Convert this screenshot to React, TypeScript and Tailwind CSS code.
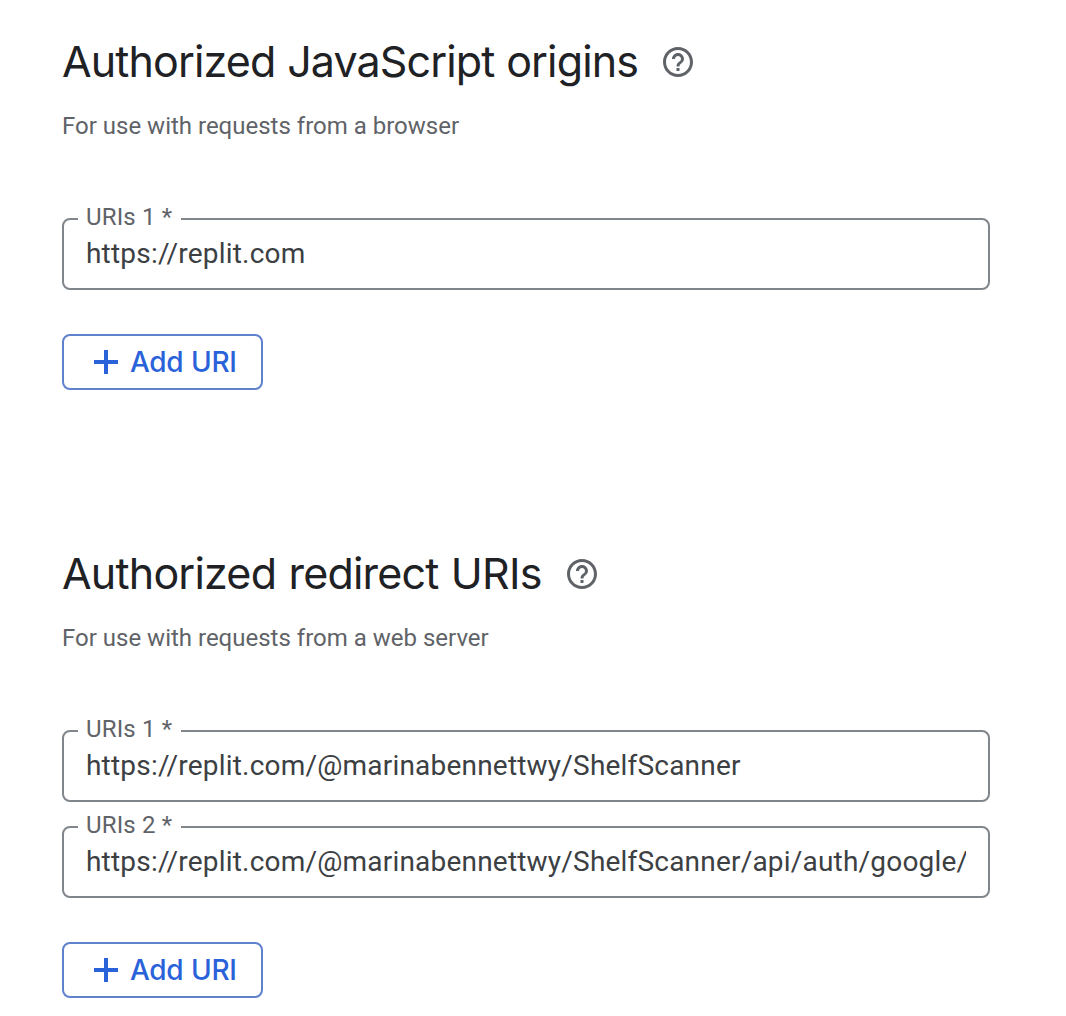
import { MdHelpOutline } from "react-icons/md";

function Field({ label, value }: { label: string; value: string }) {
  return (
    <div className="relative h-[72px] w-full rounded-lg border-2 border-[#80868b] px-[22px]">
      <label className="absolute -top-[19px] left-[14px] w-[103px] bg-white pl-2 text-[24px] leading-8 tracking-[0.15px] whitespace-nowrap text-[#5f6368]">
        {label}
      </label>
      <div className="overflow-hidden text-[28px] leading-[68px] tracking-[0.2px] whitespace-nowrap text-[#3c4043]">
        {value}
      </div>
    </div>
  );
}

function AddButton() {
  return (
    <button className="mt-11 flex h-14 w-[201px] items-center rounded-lg border-2 border-[#5f82cc] pl-[30px] text-[#2962d9]">
      <svg className="size-6 shrink-0" viewBox="0 0 24 24" fill="currentColor">
        <path d="M10 0h4v10h10v4H14v10h-4V14H0v-4h10z" />
      </svg>
      <span className="ml-3 font-['Inter',sans-serif] text-[28px] leading-9 font-medium tracking-[-0.4px] [word-spacing:1px] whitespace-nowrap">
        Add URI
      </span>
    </button>
  );
}

type SectionProps = { title: string; hint: string; values: string[]; titleClass: string };

function Section({ title, hint, values, titleClass }: SectionProps) {
  return (
    <section className="h-[512px] pt-8">
      <div className="flex h-[60px] items-center">
        <h2 className={titleClass}>{title}</h2>
        <MdHelpOutline className="size-9 shrink-0 text-[#5f6368]" />
      </div>
      <p className="mt-[18px] text-[24px] leading-8 text-[#5f6368]">{hint}</p>
      <div className="mt-[76px] flex flex-col gap-6">
        {values.map((value, i) => (
          <Field key={value} label={`URIs ${i + 1} *`} value={value} />
        ))}
      </div>
      <AddButton />
    </section>
  );
}

export default function App() {
  return (
    <main className="h-[1016px] w-[1066px] overflow-hidden bg-white pr-[76px] pl-[62px] font-['Roboto',sans-serif]">
      <Section
        title="Authorized JavaScript origins"
        hint="For use with requests from a browser"
        values={["https://replit.com"]}
        titleClass="w-[598px] pb-0.5 font-['Inter',sans-serif] text-[43px] leading-[60px] tracking-[-0.87px] [word-spacing:0.5px] whitespace-nowrap text-[#202124]"
      />
      <Section
        title="Authorized redirect URIs"
        hint="For use with requests from a web server"
        values={[
          "https://replit.com/@marinabennettwy/ShelfScanner",
          "https://replit.com/@marinabennettwy/ShelfScanner/api/auth/google/",
        ]}
        titleClass="w-[502px] pb-0.5 font-['Inter',sans-serif] text-[43px] leading-[60px] tracking-[-0.8px] [word-spacing:1px] whitespace-nowrap text-[#202124]"
      />
    </main>
  );
}
